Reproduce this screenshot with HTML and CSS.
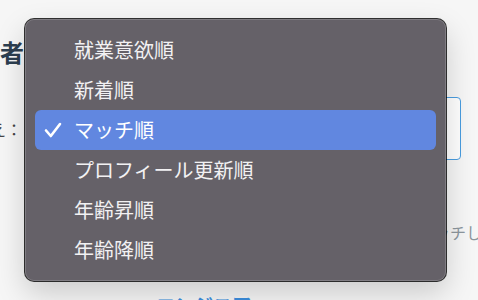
FILE: index.html
```html
<!DOCTYPE html>
<html lang="ja">
<head>
    <meta charset="UTF-8">
    <title>並び替え</title>
    <link rel="stylesheet" href="styles.css">
</head>
<body>
    <div class="page">
        <h1 class="page-title">応募者一覧</h1>
        <div class="sort-row">
            <span class="sort-label">並び替え：</span>
            <div class="sort-select">マッチ順</div>
        </div>
        <div class="hint">マッチしている順</div>
        <div class="link-title">エンジニア</div>
    </div>

    <!-- open popup menu of the sort select -->
    <div class="menu">
        <div class="menu-item">就業意欲順</div>
        <div class="menu-item">新着順</div>
        <div class="menu-item selected">
            <svg class="check" width="18" height="16" viewBox="0 0 18 16">
                <path d="M2 8.5 L6.8 14 L16 2" fill="none" stroke="#fff" stroke-width="2.6" stroke-linecap="round" stroke-linejoin="round"/>
            </svg>
            マッチ順
        </div>
        <div class="menu-item">プロフィール更新順</div>
        <div class="menu-item">年齢昇順</div>
        <div class="menu-item">年齢降順</div>
    </div>
</body>
</html>
```

FILE: styles.css
```css
html, body {
    margin: 0;
    height: 100%;
}
body {
    background: #f6f6f6;
    font-family: "Noto Sans CJK JP", "Noto Sans", sans-serif;
    overflow: hidden;
    position: relative;
}
.page {
    padding-top: 36px;
    margin-left: -48px;
    white-space: nowrap;
}
.page-title {
    margin: 0;
    font-size: 24px;
    line-height: 32px;
    color: #2c3e50;
    font-weight: bold;
}
.sort-row {
    display: flex;
    align-items: center;
    margin-top: 29px;
    margin-left: -10px;
}
.sort-label {
    font-size: 16px;
    color: #444;
    margin-right: 8px;
}
.sort-select {
    flex: none;
    box-sizing: border-box;
    width: 431px;
    height: 63px;
    border: 1px solid #4a9de0;
    border-radius: 4px;
    background: #fff;
    font-size: 16px;
    line-height: 61px;
    padding-left: 12px;
    color: #333;
}
.hint {
    margin-top: 60px;
    margin-left: 466px;
    font-size: 16px;
    color: #8d979e;
}
.link-title {
    margin-top: 47px;
    margin-left: 204px;
    font-size: 19px;
    font-weight: bold;
    color: #3b8ede;
}
.menu {
    position: absolute;
    left: 25px;
    top: 19px;
    width: 401px;
    padding: 11px 10px;
    background: #656168;
    border-radius: 9px;
    box-shadow: 0 0 0 1px rgba(0, 0, 0, 0.8), inset 0 0 0 1px rgba(255, 255, 255, 0.18), 0 12px 30px rgba(0, 0, 0, 0.18);
}
.menu-item {
    position: relative;
    height: 40px;
    line-height: 40px;
    padding-left: 39px;
    font-size: 20px;
    color: #f2f1f3;
    border-radius: 6px;
}
.menu-item.selected {
    background: #6187e0;
    color: #fff;
}
.check {
    position: absolute;
    left: 9px;
    top: 12px;
}
```
